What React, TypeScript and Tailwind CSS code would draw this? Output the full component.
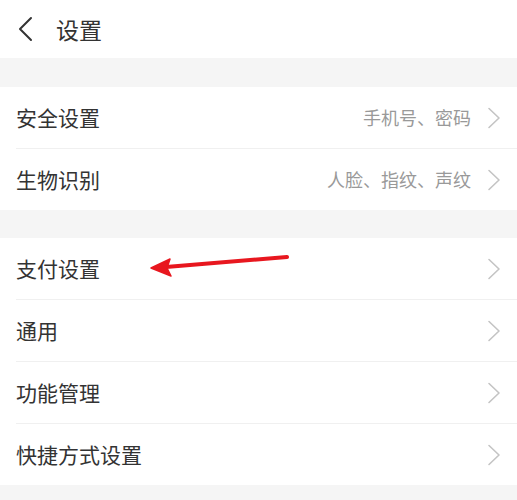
import { Fragment } from 'react';

type Item = { label: string; value?: string };

const groups: Item[][] = [
  [
    { label: '安全设置', value: '手机号、密码' },
    { label: '生物识别', value: '人脸、指纹、声纹' },
  ],
  [
    { label: '支付设置' },
    { label: '通用' },
    { label: '功能管理' },
    { label: '快捷方式设置' },
  ],
];

const Chevron = () => (
  <svg width="14" height="22" viewBox="0 0 14 22" fill="none" className="shrink-0">
    <path d="M2 1.5 L12 11 L2 20.5" stroke="#c4c4c4" strokeWidth="1.6" strokeLinecap="round" strokeLinejoin="round" />
  </svg>
);

const Row = ({ item }: { item: Item }) => (
  <div className="flex h-[61px] items-center pl-4 pr-[16px]">
    <span className="flex-1 text-[21px] text-[#333333]">{item.label}</span>
    {item.value && <span className="mr-[16px] text-[18px] text-[#999999]">{item.value}</span>}
    <Chevron />
  </div>
);

export default function App() {
  return (
    <div
      className="relative h-[500px] w-[517px] overflow-hidden bg-[#f5f5f5]"
      style={{ fontFamily: '"Noto Sans CJK SC", "Noto Sans", sans-serif' }}
    >
      <div className="flex h-[58px] items-center bg-white">
        <svg width="16" height="26" viewBox="0 0 16 26" fill="none" className="ml-[17px]">
          <path d="M14 2 L3 13 L14 24" stroke="#333333" strokeWidth="2" strokeLinecap="round" strokeLinejoin="round" />
        </svg>
        <span className="ml-[23px] text-[23px] text-[#333333]">设置</span>
      </div>

      {groups.map((group, gi) => (
        <div key={gi} className={gi === 0 ? 'mt-[29px] bg-white' : 'mt-[28px] bg-white'}>
          {group.map((item, i) => (
            <Fragment key={item.label}>
              {i > 0 && <div className="ml-4 h-px bg-[#f0f0f0]" />}
              <Row item={item} />
            </Fragment>
          ))}
        </div>
      ))}

      {/* annotation arrow */}
      <svg className="absolute left-0 top-0" width="517" height="500" viewBox="0 0 517 500" fill="none">
        <path d="M287 257 L166 267" stroke="#e8171f" strokeWidth="4" strokeLinecap="round" />
        <path d="M151 268 L170 259 L167 268 L171 276 Z" fill="#e8171f" stroke="#e8171f" strokeWidth="1.5" strokeLinejoin="round" />
      </svg>
    </div>
  );
}
